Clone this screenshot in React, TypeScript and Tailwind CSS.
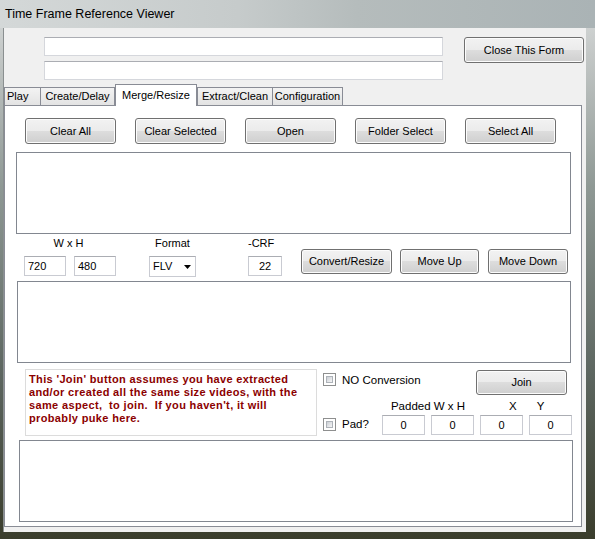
import React from 'react';

// Win7-style form: "Time Frame Reference Viewer", Merge/Resize tab

const font = "font-['Liberation_Sans',Arial,sans-serif]";

const btnCls =
  'shrink-0 flex items-center justify-center rounded-[3px] border border-[#707070] text-[11px] text-black ' +
  'bg-[linear-gradient(#f2f2f2_0%,#ebebeb_50%,#dddddd_50%,#cfcfcf_100%)] shadow-[inset_0_0_0_1px_#fcfcfc]';

const Btn = ({ label, w, h = 26 }: { label: string; w: number; h?: number }) => (
  <div className={btnCls} style={{ width: w, height: h }}>
    {label}
  </div>
);

const TextBox = ({ w, value = '', center = false }: { w: number; value?: string; center?: boolean }) => (
  <div
    className={
      'shrink-0 h-[20px] border border-[#c9cbd2] border-t-[#abadb3] bg-white text-[11px] leading-[18px] px-[3px] ' +
      (center ? 'text-center' : '')
    }
    style={{ width: w }}
  >
    {value}
  </div>
);

const CheckBox = () => (
  <div className="shrink-0 w-[13px] h-[13px] border border-[#8e8f8f] bg-white p-[2px]">
    <div className="w-full h-full bg-[linear-gradient(135deg,#cbcfd5,#f6f6f6)] border border-[#aeb3b9]" />
  </div>
);

const ListBox = ({ ml, w, h }: { ml: number; w: number; h: number }) => (
  <div className="border border-[#828790] bg-white" style={{ marginLeft: ml, width: w, height: h }} />
);

const tabs = ['Play', 'Create/Delay', 'Merge/Resize', 'Extract/Clean', 'Configuration'];
const tabW = [37, 75, 82, 76, 71];

export default function App() {
  return (
    <div
      className={`${font} w-[595px] h-[539px] overflow-hidden text-black bg-[linear-gradient(180deg,#d9dcdc_0%,#c3c7c6_10%,#8e9894_35%,#5c655f_70%,#3a3d2c_100%)]`}
    >
      {/* title bar */}
      <div className="h-[28px] pl-[5px] pt-[6px] text-[12.5px] leading-[16px] text-black bg-[linear-gradient(90deg,#d4d8d8_0%,#c6cbcb_40%,#b5bcbc_60%,#aab3b5_100%)]">
        Time Frame Reference Viewer
      </div>

      {/* client area */}
      <div className="ml-[4px] w-[582px] h-[504px] bg-[#f0f0f0] shadow-[-1px_0_0_#8a8f90]">
        <div className="flex pt-[9px]">
          <div className="ml-[40px] flex flex-col gap-[5px]">
            <div className="w-[399px] h-[19px] bg-white border border-[#d5d7dc] border-t-[#abadb3]" />
            <div className="w-[399px] h-[19px] bg-white border border-[#d5d7dc] border-t-[#abadb3]" />
          </div>
          <div className="ml-[21px]">
            <Btn label="Close This Form" w={120} h={26} />
          </div>
        </div>

        {/* tab strip */}
        <div className="mt-[4px] h-[21px] flex items-end text-[11px]">
          {tabs.map((t, i) =>
            i === 2 ? (
              <div
                key={t}
                className="relative z-10 -mb-px h-[22px] border border-b-0 border-[#898c95] bg-white flex items-start justify-center pt-[2px]"
                style={{ width: tabW[i] }}
              >
                {t}
              </div>
            ) : (
              <div
                key={t}
                className={
                  'h-[18px] border border-b-0 border-[#898c95] bg-[linear-gradient(#f3f3f3,#e3e3e3)] flex items-center leading-none ' +
                  (i === 0 ? 'pl-[2px]' : 'justify-center') +
                  (i === 1 || i === 4 ? ' -ml-px' : '')
                }
                style={{ width: tabW[i] }}
              >
                {t}
              </div>
            )
          )}
        </div>

        {/* tab page */}
        <div className="w-[578px] h-[422px] border border-[#898c95] bg-white text-[11px]">
          <div className="flex gap-[19px] pl-[20px] pt-[12px]">
            <Btn label="Clear All" w={91} />
            <Btn label="Clear Selected" w={91} />
            <Btn label="Open" w={91} />
            <Btn label="Folder Select" w={91} />
            <Btn label="Select All" w={91} />
          </div>

          <div className="mt-[8px]">
            <ListBox ml={11} w={555} h={82} />
          </div>

          {/* size / format row */}
          <div className="flex mt-[3px] h-[42px]">
            <div className="ml-[19px] flex flex-col">
              <div className="h-[13px] flex items-center whitespace-nowrap">
                <div className="w-[92px] text-center pr-[3px]">W x H</div>
                <div className="ml-[33px] w-[47px] text-center">Format</div>
                <div className="ml-[52px] w-[34px] text-center pr-[8px]">-CRF</div>
              </div>
              <div className="flex mt-[6px]">
                <TextBox w={42} value="720" />
                <div className="ml-[8px]"><TextBox w={42} value="480" /></div>
                <div className="ml-[33px] w-[47px] h-[21px] border border-[#c9cbd2] border-t-[#abadb3] bg-white flex items-center pl-[3px] text-[11px]">
                  FLV
                  <svg className="ml-[12px]" width="7" height="4" viewBox="0 0 7 4">
                    <path d="M0 0 H7 L3.5 4 Z" fill="#000" />
                  </svg>
                </div>
                <div className="ml-[52px]"><TextBox w={34} value="22" center /></div>
              </div>
            </div>
            <div className="ml-[19px] mt-[12px] flex items-start">
              <Btn label="Convert/Resize" w={91} h={25} />
              <div className="ml-[8px]"><Btn label="Move Up" w={79} h={25} /></div>
              <div className="ml-[9px]"><Btn label="Move Down" w={80} h={25} /></div>
            </div>
          </div>

          <div className="mt-[2px]">
            <ListBox ml={12} w={554} h={82} />
          </div>

          {/* join area */}
          <div className="flex mt-[6px] h-[67px]">
            <div className="shrink-0 ml-[20px] w-[292px] h-[67px] border border-[#dcdcdc] bg-white px-[3px] pt-[3px] text-[11px] leading-[13px] font-bold text-[#8b0000] tracking-[0.35px]">
              This 'Join' button assumes you have extracted and/or created all the same size videos, with the same aspect,&nbsp; to join.&nbsp; If you haven't, it will probably puke here.
            </div>
            <div className="shrink-0 ml-[6px] flex flex-col w-[249px]">
              <div className="flex items-start h-[30px]">
                <div className="mt-[4px]"><CheckBox /></div>
                <div className="ml-[6px] mt-[3px] text-[11.5px]">NO Conversion</div>
                <div className="ml-auto mr-[5px] mt-[1px]">
                  <Btn label="Join" w={91} h={25} />
                </div>
              </div>
              <div className="flex h-[15px] items-center text-[11.5px]">
                <div className="ml-[59px] w-[92px] text-center">Padded W x H</div>
                <div className="ml-[35px]">X</div>
                <div className="ml-[20px]">Y</div>
              </div>
              <div className="flex items-center h-[21px]">
                <div className="w-[59px] flex items-center">
                  <CheckBox />
                  <div className="ml-[6px] text-[11.5px]">Pad?</div>
                </div>
                <div className="flex gap-[6px]">
                  <TextBox w={43} value="0" center />
                  <TextBox w={43} value="0" center />
                  <TextBox w={43} value="0" center />
                  <TextBox w={43} value="0" center />
                </div>
              </div>
            </div>
          </div>

          <div className="mt-[4px]">
            <ListBox ml={14} w={554} h={82} />
          </div>
        </div>
      </div>
    </div>
  );
}
